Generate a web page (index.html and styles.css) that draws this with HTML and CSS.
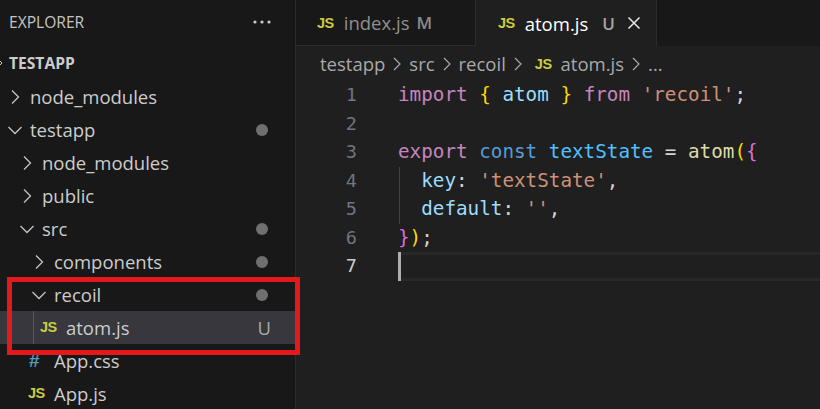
FILE: index.html
```html
<!DOCTYPE html>
<html lang="en">
<head>
<meta charset="utf-8">
<title>VS Code</title>
<link rel="stylesheet" href="styles.css">
</head>
<body>
<div class="window">
  <aside class="sidebar">
    <div class="side-head"><span>EXPLORER</span>
      <svg class="dots" width="20" height="6" viewBox="0 0 20 6"><circle cx="3" cy="3" r="1.6"/><circle cx="10" cy="3" r="1.6"/><circle cx="17" cy="3" r="1.6"/></svg>
    </div>
    <div class="root"><svg class="root-mark" width="3" height="6" viewBox="0 0 3 6"><path d="M0 1L2 3L0 5"/></svg>TESTAPP</div>
    <div class="row l0"><svg class="chev" viewBox="0 0 16 16"><path d="M5 1.5L11.5 8L5 14.5"/></svg><span class="name">node_modules</span></div>
    <div class="row l0 open"><svg class="chev" viewBox="0 0 16 16"><path d="M1.5 5L8 11.5L14.5 5"/></svg><span class="name">testapp</span><i class="dot"></i></div>
    <div class="row l1"><svg class="chev" viewBox="0 0 16 16"><path d="M5 1.5L11.5 8L5 14.5"/></svg><span class="name">node_modules</span></div>
    <div class="row l1"><svg class="chev" viewBox="0 0 16 16"><path d="M5 1.5L11.5 8L5 14.5"/></svg><span class="name">public</span></div>
    <div class="row l1 open"><svg class="chev" viewBox="0 0 16 16"><path d="M1.5 5L8 11.5L14.5 5"/></svg><span class="name">src</span><i class="dot"></i></div>
    <div class="row l2"><svg class="chev" viewBox="0 0 16 16"><path d="M5 1.5L11.5 8L5 14.5"/></svg><span class="name">components</span><i class="dot"></i></div>
    <div class="row l2 open"><svg class="chev" viewBox="0 0 16 16"><path d="M1.5 5L8 11.5L14.5 5"/></svg><span class="name">recoil</span><i class="dot"></i></div>
    <div class="row selected"><span class="guide"></span><span class="js">JS</span><span class="name">atom.js</span><span class="badge">U</span></div>
    <div class="row file"><span class="hash">#</span><span class="name">App.css</span></div>
    <div class="row file"><span class="js">JS</span><span class="name">App.js</span></div>
    <div class="redbox"></div>
  </aside>
  <main class="main">
    <div class="tabs">
      <div class="tab"><span class="js">JS</span><span class="tab-name">index.js</span><span class="tab-flag">M</span></div>
      <div class="tab active"><span class="js">JS</span><span class="tab-name">atom.js</span><span class="tab-flag">U</span>
        <svg class="close" width="14" height="14" viewBox="0 0 14 14"><path d="M1.5 1.5L12.5 12.5M12.5 1.5L1.5 12.5"/></svg>
      </div>
    </div>
    <div class="crumbs">
      <span>testapp</span><svg class="sep" viewBox="0 0 10 16"><path d="M2 2L8 8L2 14"/></svg>
      <span>src</span><svg class="sep" viewBox="0 0 10 16"><path d="M2 2L8 8L2 14"/></svg>
      <span>recoil</span><svg class="sep" viewBox="0 0 10 16"><path d="M2 2L8 8L2 14"/></svg>
      <span class="js">JS</span><span>atom.js</span><svg class="sep" viewBox="0 0 10 16"><path d="M2 2L8 8L2 14"/></svg>
      <span>...</span>
    </div>
    <div class="code">
      <div class="line"><span class="num">1</span><span class="src"><b class="kw">import</b> <b class="gold">{</b> <b class="var">atom</b> <b class="gold">}</b> <b class="kw">from</b> <b class="str">'recoil'</b>;</span></div>
      <div class="line"><span class="num">2</span><span class="src"></span></div>
      <div class="line"><span class="num">3</span><span class="src"><b class="kw">export</b> <b class="blue">const</b> <b class="const">textState</b> = <b class="fn">atom</b><b class="gold">(</b><b class="pink">{</b></span></div>
      <div class="line"><span class="num">4</span><span class="src indented"><b class="var">key</b>: <b class="str">'textState'</b>,</span></div>
      <div class="line"><span class="num">5</span><span class="src indented"><b class="var">default</b>: <b class="str">''</b>,</span></div>
      <div class="line"><span class="num">6</span><span class="src"><b class="pink">}</b><b class="gold">)</b>;</span></div>
      <div class="line current"><span class="num">7</span><span class="src"><i class="caret"></i></span></div>
    </div>
  </main>
</div>
</body>
</html>
```
FILE: styles.css
```css
* { box-sizing: border-box; }
html, body { margin: 0; height: 100%; overflow: hidden; background: #1f1f1f; }
b, i { font-weight: normal; font-style: normal; }
.window { display: flex; width: 820px; height: 409px; overflow: hidden; font-family: "Open Sans", "Noto Sans", sans-serif; font-size: 18.5px; color: #cccccc; }

.sidebar { position: relative; z-index: 1; flex: 0 0 296px; background: #181818; border-right: 1px solid #2b2b2b; }
.side-head { display: flex; align-items: center; justify-content: space-between; height: 44px; padding: 0 23px 0 9px; font-size: 15.6px; color: #c4c4c4; }
.dots { fill: #cccccc; }
.root { position: relative; display: flex; align-items: center; height: 38px; padding-left: 9px; font-size: 15.6px; font-weight: 700; color: #cccccc; }
.root-mark { position: absolute; left: 0; top: 16px; fill: none; stroke: #ccc; stroke-width: 1; }
.row { display: flex; align-items: center; height: 33px; line-height: 33px; padding-right: 30px; color: #cccccc; margin-top: 0; }
.root + .row { margin-top: -2px; }
.l0 { padding-left: 7px; }
.l1 { padding-left: 19px; }
.l2 { padding-left: 31px; }
.chev { flex: 0 0 16px; width: 16px; height: 16px; margin-right: 7px; fill: none; stroke: #c5c5c5; stroke-width: 1.3; }
.dot { width: 12px; height: 12px; margin-left: auto; margin-right: -3px; border-radius: 50%; background: #6f6f6f; }
.selected { position: relative; padding-left: 40px; background: #37373d; color: #cccccc; }
.guide { position: absolute; left: 33px; top: 0; bottom: 0; width: 1px; background: #585858; }
.js { font-family: "Liberation Sans", sans-serif; font-weight: 700; font-size: 14.5px; letter-spacing: -0.5px; color: #cbcb41; }
.selected .js { width: 26px; }
.badge { margin-left: auto; margin-right: -6px; color: #a9a9a9; font-size: 18.5px; }
.file { padding-left: 28px; }
.file .js { width: 26px; }
.hash { width: 26px; padding-left: 1px; font-family: "Liberation Sans", sans-serif; font-weight: 700; font-size: 19px; color: #519aba; }
.redbox { position: absolute; left: 7px; top: 277px; width: 293px; height: 78px; border: 5px solid #e3191c; }

.main { flex: 1; display: flex; flex-direction: column; min-width: 0; background: #1f1f1f; }
.tabs { display: flex; height: 46px; background: #181818; flex: none; }
.tab { display: flex; align-items: center; gap: 10px; height: 46px; padding: 0 0 0 21px; width: 180px; background: #181818; color: #8f8f8f; border-right: 1px solid #2b2b2b; border-bottom: 1px solid #2b2b2b; }
.tab-flag { margin-left: -3px; color: #8a8a8a; font-weight: 600; font-size: 17px; }
.tab.active { background: #1f1f1f; width: 181px; color: #ffffff; border-bottom: 0; padding-left: 22px; }
.active .tab-flag { margin-left: 4px; color: #a6a6a6; }
.close { fill: none; stroke: #e8e8e8; stroke-width: 1.5; margin-left: 2px; }
.crumbs { display: flex; align-items: center; height: 35px; flex: none; padding-left: 24px; gap: 7px; color: #a9a9a9; font-size: 18.5px; }
.crumbs .js { margin-left: 5px; margin-right: 2px; }
.sep { width: 10px; height: 16px; fill: none; stroke: #a9a9a9; stroke-width: 1.2; }
.code { font-family: "DejaVu Sans Mono", monospace; font-size: 19.27px; color: #d4d4d4; }
.line { position: relative; display: flex; height: 28.5px; line-height: 28.5px; white-space: pre; }
.num { flex: 0 0 61px; text-align: right; color: #6e7681; font-size: 18.5px; }
.src { position: relative; margin-left: 41px; flex: 1; }
.indented { padding-left: 23.2px; }
.indented::before { content: ""; position: absolute; left: 1px; top: 0; bottom: 0; width: 1px; background: #404040; }
.current .src { border-top: 3px solid #282828; border-bottom: 3px solid #282828; }
.current .num { color: #cccccc; }
.caret { position: absolute; left: 0; top: -3px; bottom: -3px; width: 3px; background: #aeafad; }
.kw { color: #c586c0; }
.gold { color: #ffd700; }
.pink { color: #da70d6; }
.var { color: #9cdcfe; }
.str { color: #ce9178; }
.blue { color: #569cd6; }
.const { color: #4fc1ff; }
.fn { color: #dcdcaa; }
```
